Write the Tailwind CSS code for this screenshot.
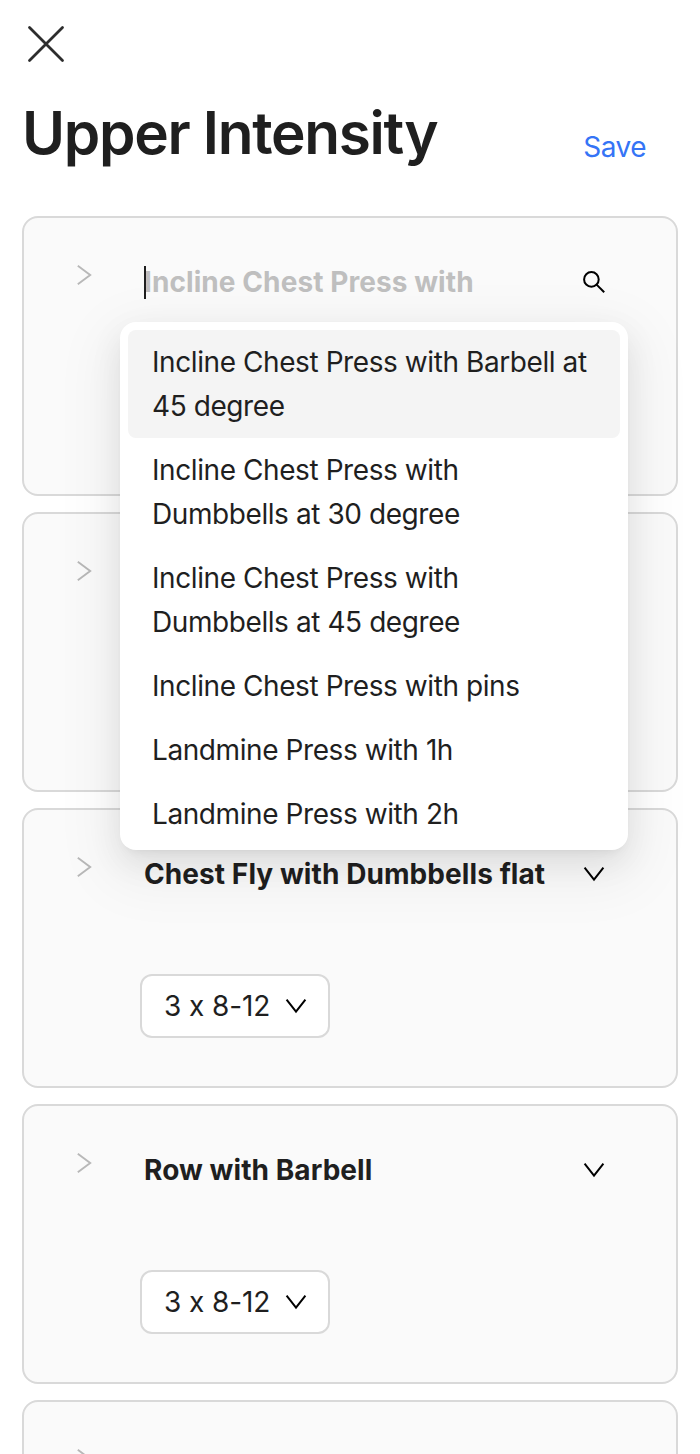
<!DOCTYPE html>
<html lang="en"><head><meta charset="utf-8"><title>Upper Intensity</title>
<script src="https://cdn.jsdelivr.net/npm/@tailwindcss/browser@4"></script></head>
<body class="bg-white">
<div class="relative h-[1454px] w-[700px] overflow-hidden bg-white font-['Inter',sans-serif] text-[28px] leading-[44px] tracking-[-0.42px] text-[#1f1f1f]">
<svg class="hidden">
<symbol id="right" viewBox="0 0 16 24"><path d="M1.8 2.8 14.2 12 1.8 21.2" fill="none" stroke="#b8b8b8" stroke-width="1.9"/></symbol>
<symbol id="down" viewBox="0 0 24 24"><path d="M2.6 5.6 12 17.6 21.4 5.6" fill="none" stroke="#000" stroke-width="2"/></symbol>
</svg>
<header class="px-[22px] pt-6">
<button aria-label="Close" class="block pl-1"><svg class="size-10" viewBox="0 0 40 40" fill="none" stroke="#2d2d2d" stroke-width="2.8" stroke-linecap="round"><path d="M5.5 3.5 38.5 36.5M38.5 3.5 5.5 36.5" transform="translate(-2 0)"/></svg></button>
<div class="flex items-center justify-between pt-[29px] pr-8"><h1 class="h-[80px] text-[58.5px] leading-[80px] font-semibold tracking-[-1.3px] whitespace-nowrap">Upper Intensity</h1><button class="pt-[28px] tracking-[-0.5px] text-[#3574f6]">Save</button></div>
</header>
<main class="flex flex-col gap-4 px-[22px] pt-[43px] font-bold tracking-[0.08px]">
<section class="h-[280px] shrink-0 rounded-2xl border-2 border-[#d9d9d9] bg-[#fafafa]">
<div class="flex pt-[42px] pl-[52px]"><svg class="mt-[3px] h-6 w-4"><use href="#right"/></svg>
<div class="ml-[52px] flex w-[462px] items-center justify-between text-[#bfbfbf]"><span class="relative">Incline Chest Press with<i class="absolute top-[6px] left-0 h-[33px] w-[2px] bg-[#1f1f1f]"></i></span><svg class="size-6" viewBox="0 0 24 24" fill="none" stroke="#000" stroke-width="2"><circle cx="9.4" cy="9.4" r="7.3"/><path d="m14.6 14.6 7.6 7.6"/></svg></div></div>
</section>
<section class="h-[280px] shrink-0 rounded-2xl border-2 border-[#d9d9d9] bg-[#fafafa]">
<div class="flex pt-[42px] pl-[52px]"><svg class="mt-[3px] h-6 w-4"><use href="#right"/></svg></div>
</section>
<section class="h-[280px] shrink-0 rounded-2xl border-2 border-[#d9d9d9] bg-[#fafafa]">
<div class="flex pt-[42px] pl-[52px]"><svg class="mt-[3px] h-6 w-4"><use href="#right"/></svg>
<div class="ml-[52px] flex w-[462px] items-center justify-between whitespace-nowrap"><span>Chest Fly with Dumbbells flat</span><svg class="size-6"><use href="#down"/></svg></div></div>
<button class="mt-[78px] ml-[116px] flex h-16 w-[190px] items-center justify-between rounded-xl border-2 border-[#d9d9d9] bg-white pr-5 pl-[22px] font-normal tracking-[-0.1px]"><span>3 x 8-12</span><svg class="size-6"><use href="#down"/></svg></button>
</section>
<section class="h-[280px] shrink-0 rounded-2xl border-2 border-[#d9d9d9] bg-[#fafafa]">
<div class="flex pt-[42px] pl-[52px]"><svg class="mt-[3px] h-6 w-4"><use href="#right"/></svg>
<div class="ml-[52px] flex w-[462px] items-center justify-between whitespace-nowrap"><span>Row with Barbell</span><svg class="size-6"><use href="#down"/></svg></div></div>
<button class="mt-[78px] ml-[116px] flex h-16 w-[190px] items-center justify-between rounded-xl border-2 border-[#d9d9d9] bg-white pr-5 pl-[22px] font-normal tracking-[-0.1px]"><span>3 x 8-12</span><svg class="size-6"><use href="#down"/></svg></button>
</section>
<section class="h-[280px] shrink-0 rounded-2xl border-2 border-[#d9d9d9] bg-[#fafafa]">
<div class="flex pt-[42px] pl-[52px]"><svg class="mt-[3px] h-6 w-4"><use href="#right"/></svg></div>
</section>
</main>
<ul class="absolute top-[322px] left-[120px] h-[528px] w-[508px] overflow-hidden rounded-2xl bg-white p-2 shadow-[0_12px_32px_0_rgba(0,0,0,0.08),0_6px_12px_-8px_rgba(0,0,0,0.12),0_18px_56px_16px_rgba(0,0,0,0.05)]">
<li class="rounded-lg bg-[#f4f4f4] px-6 py-[10px] whitespace-nowrap">Incline Chest Press with Barbell at<br>45 degree</li>
<li class="px-6 py-[10px]">Incline Chest Press with<br>Dumbbells at 30 degree</li>
<li class="px-6 py-[10px]">Incline Chest Press with<br>Dumbbells at 45 degree</li>
<li class="px-6 py-[10px]">Incline Chest Press with pins</li>
<li class="px-6 py-[10px]">Landmine Press with 1h</li>
<li class="px-6 py-[10px]">Landmine Press with 2h</li></ul>
</div></body></html>
